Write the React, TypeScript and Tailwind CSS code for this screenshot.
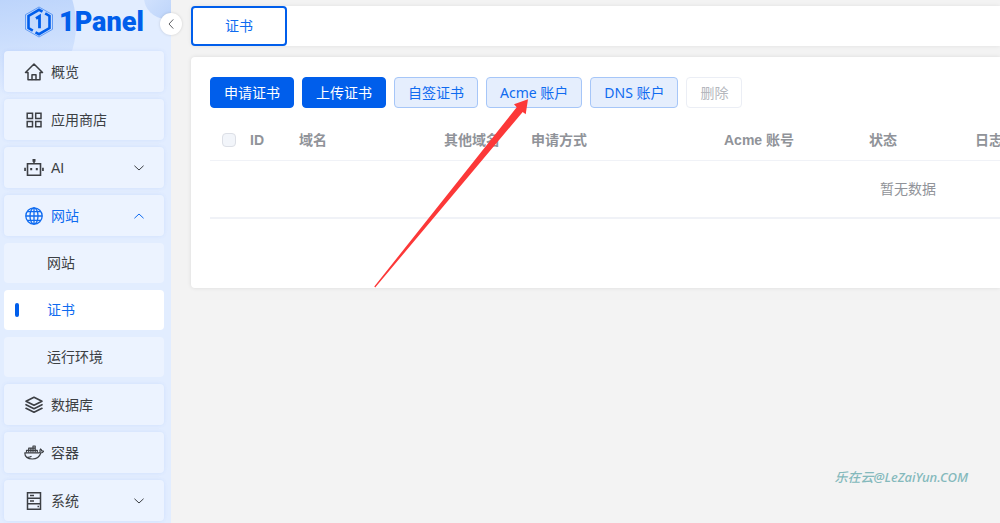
import React from "react";

interface IconProps {
  className?: string;
}

const HomeIcon: React.FC<IconProps> = ({ className }) => (
  <svg
    viewBox="0 0 20 20"
    className={className}
    fill="none"
    stroke="currentColor"
    strokeWidth="1.5"
    strokeLinejoin="round"
    strokeLinecap="round"
  >
    <path d="M1.5 10.5 10 2l8.5 8.5H16v7.2H4v-7.2z" />
    <path d="M8 17.500v-4.700h4v4.700" />
  </svg>
);

const AppsIcon: React.FC<IconProps> = ({ className }) => (
  <svg
    viewBox="0 0 20 20"
    className={className}
    fill="none"
    stroke="currentColor"
    strokeWidth="1.5"
  >
    <path d="M3.2 3.2h5.300v5.300H3.200zM11.700 3.200H17v5.300h-5.300zM3.200 11.500h5.300v5.300H3.200zM11.700 11.500H17v5.300h-5.300z" />
  </svg>
);

const RobotIcon: React.FC<IconProps> = ({ className }) => (
  <svg
    viewBox="0 0 20 20"
    className={className}
    fill="none"
    stroke="currentColor"
    strokeWidth="1.6"
  >
    <path d="M3.500 5.700h13v11.500h-13zM10 5.700V3" />
    <path
      d="M8.500.9h3v2.900h-3zM6.200 10h2v2.200h-2zM11.800 10h2v2.200h-2zM.2 9.700h1.700v3.300H.2zM18.100 9.700h1.700v3.300h-1.700z"
      fill="currentColor"
      stroke="none"
    />
  </svg>
);

const GlobeIcon: React.FC<IconProps> = ({ className }) => (
  <svg
    viewBox="0 0 20 20"
    className={className}
    fill="none"
    stroke="currentColor"
    strokeWidth="1.3"
  >
    <circle cx="10" cy="10" r="8.200" />
    <ellipse cx="10" cy="10" rx="4" ry="8.200" />
    <path d="M10 1.800v16.400M1.800 10h16.400M3 5.700h14M3 14.300h14" />
  </svg>
);

const LayersIcon: React.FC<IconProps> = ({ className }) => (
  <svg
    viewBox="0 0 20 20"
    className={className}
    fill="none"
    stroke="currentColor"
    strokeWidth="1.6"
    strokeLinejoin="round"
    strokeLinecap="round"
  >
    <path d="M10 2.200 18 6.200l-8 4-8-4z" />
    <path d="m2 9.700 8 4 8-4M2 13.300l8 4 8-4" />
  </svg>
);

const DockerIcon: React.FC<IconProps> = ({ className }) => (
  <svg
    viewBox="0 0 20 20"
    className={className}
    fill="none"
    stroke="currentColor"
    strokeWidth="1.2"
    strokeLinejoin="round"
  >
    <path d="M.8 9.800h14c1 0 1.500-.5 1.300-1.500-.3-.9-.2-1.500.4-2.300.8.5 1.200 1 1.200 1.900.7-.1 1.300 0 1.900.4-.5 1.200-1.500 1.700-2.800 1.700-1.300 4-4.200 6-8.500 6-4.500 0-7.600-2-7.500-6.200z" />
    <path d="M2.500 9.600V7.300h10.800v2.300M4.700 7.300V5.200h6.500v4.400M4.700 9.600V7.300M6.900 9.600V5.200M9 9.600V3h2.200v2.200" />
    <path d="M3 14.300c2 .2 3.400-.2 4.500-1" />
  </svg>
);

const ServerIcon: React.FC<IconProps> = ({ className }) => (
  <svg
    viewBox="0 0 20 20"
    className={className}
    fill="none"
    stroke="currentColor"
    strokeWidth="1.5"
  >
    <path d="M3.500 1.700h13v16.600h-13zM3.500 7.200h13M3.500 12.700h13" />
    <path d="M6 4.500h4M6 10h4M13.500 15.500H15" />
  </svg>
);

const Chevron: React.FC<IconProps> = ({ className }) => (
  <svg
    viewBox="0 0 12 12"
    className={className}
    fill="none"
    stroke="currentColor"
    strokeWidth="1"
    strokeLinecap="round"
    strokeLinejoin="round"
  >
    <path d="M1.700 4 6 8l4.300-4" />
  </svg>
);

interface MenuEntry {
  label: string;
  icon: React.FC<IconProps>;
  expandable?: boolean;
  children?: { label: string; active?: boolean }[];
}

const menu: MenuEntry[] = [
  { label: "概览", icon: HomeIcon },
  { label: "应用商店", icon: AppsIcon },
  { label: "AI", icon: RobotIcon, expandable: true },
  {
    label: "网站",
    icon: GlobeIcon,
    expandable: true,
    children: [
      { label: "网站" },
      { label: "证书", active: true },
      { label: "运行环境" },
    ],
  },
  { label: "数据库", icon: LayersIcon },
  { label: "容器", icon: DockerIcon },
  { label: "系统", icon: ServerIcon, expandable: true },
];

const MenuItem: React.FC<{ entry: MenuEntry }> = ({ entry }) => {
  const Icon = entry.icon;
  const open = !!entry.children;
  const rowClass = `flex h-[41px] w-full items-center rounded bg-[#ecf3ff] pr-[19px] pl-5 text-left shadow-[0_0_4px_rgba(0,94,235,0.08)] ${
    open ? "text-[#0f6bf0]" : "text-[#3c3f44]"
  }`;
  const content = (
    <>
      <Icon className="size-5 shrink-0" />
      <span className="ml-[7px] flex-1">{entry.label}</span>
      {entry.expandable && (
        <Chevron className={open ? "size-3 rotate-180" : "size-3"} />
      )}
    </>
  );

  return (
    <li>
      {entry.expandable ? (
        <button type="button" aria-expanded={open} className={rowClass}>
          {content}
        </button>
      ) : (
        <a href="#" className={rowClass}>
          {content}
        </a>
      )}
      {entry.children && (
        <ul className="mt-[7px] flex flex-col gap-[7px]">
          {entry.children.map((child) => (
            <li key={child.label}>
              <a
                href="#"
                className={`flex h-10 items-center rounded pl-[11px] ${
                  child.active
                    ? "bg-white text-[#0f6bf0]"
                    : "bg-[#ecf3ff] text-[#3c3f44]"
                }`}
              >
                <span
                  className={`h-[14px] w-1 rounded-sm ${child.active ? "bg-[#005eeb]" : ""}`}
                />
                <span className="ml-7">{child.label}</span>
              </a>
            </li>
          ))}
        </ul>
      )}
    </li>
  );
};

const Sidebar: React.FC = () => (
  <aside className="relative w-[171px] shrink-0 bg-[#e2edff] font-['Liberation_Sans','Noto_Sans_CJK_SC',sans-serif]">
    {/* Soft circles behind the logo */}
    <svg className="absolute inset-0 h-40 w-full" viewBox="0 0 171 160">
      <defs>
        <linearGradient id="glow" x1="0.5" y1="0.2" x2="0.6" y2="1">
          <stop offset="0" stopColor="#b3cefa" />
          <stop offset="0.5" stopColor="#cbdefd" />
          <stop offset="0.9" stopColor="#e2edff" />
        </linearGradient>
        <linearGradient id="drop" x1="0" y1="0" x2="1" y2="1">
          <stop offset="0" stopColor="#dce9ff" />
          <stop offset="1" stopColor="#b5cff9" />
        </linearGradient>
      </defs>
      <circle cx="-11" cy="25" r="87" fill="url(#glow)" />
      <circle cx="166" cy="-3" r="22" fill="url(#drop)" />
    </svg>

    <div className="relative flex h-[51px] items-center pb-[7px] pl-6">
      <a href="#" className="flex items-center gap-[5px] text-[#005eeb]">
        <svg
          viewBox="0 0 30 32"
          className="h-8 w-[30px]"
          fill="none"
          stroke="currentColor"
        >
          <path d="M15 1 28.500 8.700v14.600L15 31 1.500 23.300V8.700z" strokeWidth="1" opacity="0.5" />
          <path
            d="M18.500 5.700 15 3.800 4.500 9.900v12.200l4.300 2.500M11.500 26.300l3.500 1.900 10.500-6.100V9.900l-4.300-2.500"
            strokeWidth="2.6"
          />
          <path d="M12 12.500 15.500 10.300v12" strokeWidth="2.800" />
        </svg>
        <span className="font-['Roboto','Open_Sans',sans-serif] text-[27px] leading-8 font-black">
          1Panel
        </span>
      </a>
    </div>

    <nav className="relative pr-[7px] pb-1 pl-1">
      <ul className="flex flex-col gap-[7px]">
        {menu.map((entry) => (
          <MenuItem key={entry.label} entry={entry} />
        ))}
      </ul>
    </nav>

    <button
      type="button"
      aria-label="收起菜单"
      className="absolute top-[13px] -right-[11px] flex size-[22px] items-center justify-center rounded-full bg-white text-[#606266] shadow-[0_0_3px_rgba(0,0,0,0.15)]"
    >
      <Chevron className="size-3 rotate-90" />
    </button>
  </aside>
);

const actions = [
  { label: "申请证书", kind: "primary" },
  { label: "上传证书", kind: "primary" },
  { label: "自签证书", kind: "plain" },
  { label: "Acme 账户", kind: "plain" },
  { label: "DNS 账户", kind: "plain" },
  { label: "删除", kind: "disabled" },
];

const actionStyles: Record<string, string> = {
  primary: "border-[#005eeb] bg-[#005eeb] text-white",
  plain: "border-[#a6c6f8] bg-[#e5eefd] text-[#0f6bf0]",
  disabled: "border-[#ebeef5] bg-white text-[#b4b7bd]",
};

const columns = [
  { label: "ID", width: "w-[49px]" },
  { label: "域名", width: "w-[145px]" },
  { label: "其他域名", width: "w-[87px]" },
  { label: "申请方式", width: "w-[193px]" },
  { label: "Acme 账号", width: "w-[145px]" },
  { label: "状态", width: "w-[106px]" },
  { label: "日志", width: "" },
];

const CertificateTable: React.FC = () => (
  <table className="w-[1396px] table-fixed border-collapse">
    <thead>
      <tr className="h-10 border-b border-[#f0f2f7] text-left text-[#909399]">
        <th className="w-7 pl-3">
          <input
            type="checkbox"
            disabled
            aria-label="全选"
            className="block size-[14px] appearance-none rounded-sm border border-[#dcdfe6] bg-[#f2f5fa]"
          />
        </th>
        {columns.map((column) => (
          <th
            key={column.label}
            className={`pl-3 font-['Liberation_Sans','Noto_Sans_CJK_SC',sans-serif] font-bold whitespace-nowrap ${column.width}`}
          >
            {column.label}
          </th>
        ))}
      </tr>
    </thead>
    <tbody>
      <tr className="h-[58px] border-b-2 border-[#f0f2f7]">
        <td colSpan={8} className="text-center text-[#909399]">
          暂无数据
        </td>
      </tr>
    </tbody>
  </table>
);

export default function App() {
  return (
    <div className="relative flex min-h-screen overflow-hidden bg-[#f3f3f3] font-['Noto_Sans','Noto_Sans_CJK_SC',sans-serif] text-sm">
      <Sidebar />

      <main className="min-w-0 flex-1 pt-[6px] pl-5">
        {/* Route tabs */}
        <div className="flex h-10 rounded-l bg-white shadow-[0_0_4px_rgba(0,0,0,0.08)]">
          <button
            type="button"
            className="w-24 rounded border-2 border-[#005eeb] text-[#0f6bf0]"
          >
            证书
          </button>
        </div>

        <section className="mt-[11px] overflow-hidden rounded-l bg-white pt-5 pb-[69px] pl-[19px] shadow-[0_0_4px_rgba(0,0,0,0.1)]">
          <div className="flex gap-2">
            {actions.map((action) => (
              <button
                key={action.label}
                type="button"
                disabled={action.kind === "disabled"}
                className={`h-[31px] rounded border px-[13px] whitespace-nowrap ${actionStyles[action.kind]}`}
              >
                {action.label}
              </button>
            ))}
          </div>
          <div className="mt-3 overflow-hidden">
            <CertificateTable />
          </div>
        </section>
      </main>

      {/* Pointer to the Acme account button */}
      <svg
        className="pointer-events-none absolute top-[98px] left-[374px] h-[190px] w-[156px]"
        viewBox="0 0 156 190"
        fill="#fc3838"
      >
        <path d="M.3 188.500 142.700 9.300 140 6.300l14-5-2.300 15-3-2.300L1.200 189.500z" />
      </svg>

      <p className="absolute right-8 bottom-10 text-[13px] leading-4 font-medium text-[#84b9bc] italic">
        乐在云@LeZaiYun.COM
      </p>
    </div>
  );
}
